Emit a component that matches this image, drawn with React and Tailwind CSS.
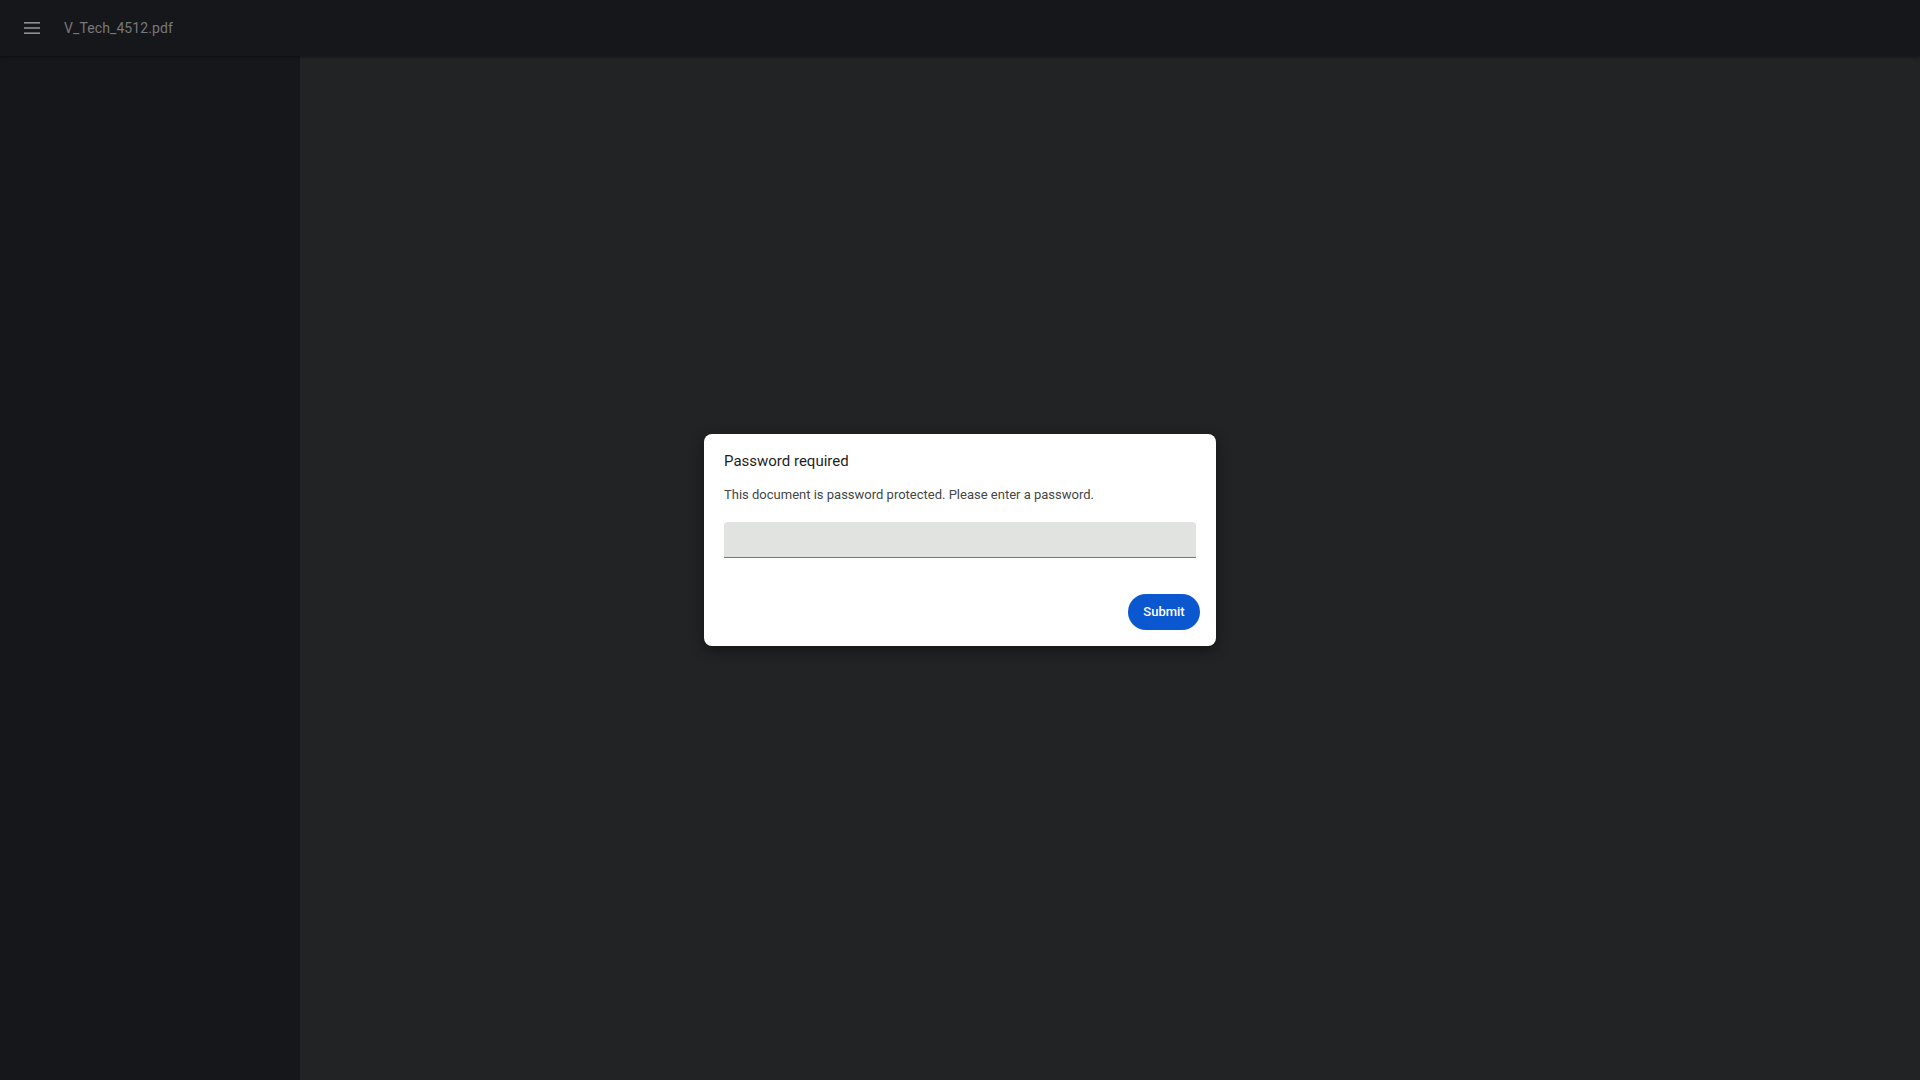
import React from 'react'

const MenuIcon = () => (
  <svg width="20" height="20" viewBox="0 0 20 20" className="text-[#8e8f91]">
    <rect x="2" y="4" width="16" height="1.6" fill="currentColor" />
    <rect x="2" y="9.2" width="16" height="1.6" fill="currentColor" />
    <rect x="2" y="14.4" width="16" height="1.6" fill="currentColor" />
  </svg>
)

export default function App() {
  return (
    <div className="h-[1080px] w-full flex flex-col bg-[#222325] font-[Roboto,'Liberation_Sans',sans-serif] overflow-hidden">
      {/* toolbar */}
      <header className="h-14 shrink-0 flex items-center bg-[#16171a] shadow-[0_1px_3px_rgba(0,0,0,0.45)] z-10">
        <button className="ml-[22px] w-5 h-5 flex items-center justify-center">
          <MenuIcon />
        </button>
        <span className="ml-[22px] text-sm text-[#77787a] tracking-[0.1px]">V_Tech_4512.pdf</span>
      </header>

      <div className="flex flex-1 min-h-0">
        {/* sidebar */}
        <aside className="w-[300px] shrink-0 bg-[#16171a]" />

        {/* viewer */}
        <main className="flex-1 flex justify-center items-start pt-[378px] pr-[300px]">
          <div className="w-[512px] bg-white rounded-lg shadow-[0_4px_14px_rgba(0,0,0,0.45)] pt-[17px] pb-4">
            <div className="px-5">
              <h2 className="text-[15px] leading-5 text-[#1f1f1f]">Password required</h2>
              <p className="mt-3.5 text-[13px] leading-5 text-[#444746]">
                This document is password protected. Please enter a password.
              </p>
              <input
                type="password"
                className="mt-[17px] w-full h-9 bg-[#e1e3e1] rounded-t border-b border-[#747775] outline-none px-3 text-sm"
              />
            </div>
            <div className="mt-9 flex justify-end pr-4">
              <button className="h-9 w-[72px] rounded-full bg-[#0b57d0] text-white text-[13px] font-medium">
                Submit
              </button>
            </div>
          </div>
        </main>
      </div>
    </div>
  )
}
